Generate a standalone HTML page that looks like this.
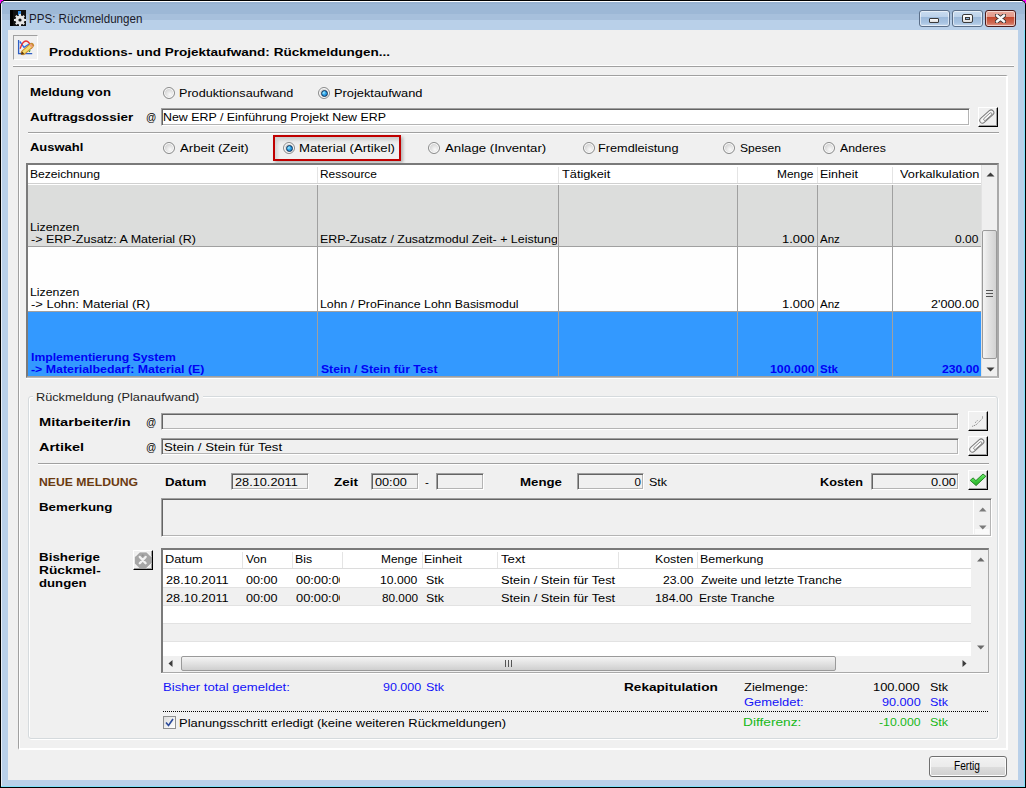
<!DOCTYPE html><html><head><meta charset="utf-8"><style>html,body{margin:0;padding:0;width:1026px;height:788px;overflow:hidden;background:#000}</style></head><body><div style="position:absolute;left:0px;top:0px;width:1026px;height:788px;background:#f0f"></div><div style="position:absolute;left:0px;top:0px;width:1026px;height:788px;background:#000;border-radius:5px 5px 0 0"></div><div style="position:absolute;left:1px;top:1px;width:1024px;height:786px;background:#b9d0e9;border-radius:4px 4px 0 0;overflow:hidden"></div><div style="position:absolute;left:4px;top:1px;width:1018px;height:1px;background:#fdfeff"></div><div style="position:absolute;left:2px;top:2px;width:1022px;height:2px;background:#98b3d2"></div><div style="position:absolute;left:1px;top:4px;width:1024px;height:10px;background:#9db8d6"></div><div style="position:absolute;left:1px;top:14px;width:1024px;height:6px;background:#a7c0dc"></div><div style="position:absolute;left:1px;top:20px;width:1024px;height:10px;background:#b9d0e9"></div><div style="position:absolute;left:1px;top:4px;width:1px;height:783px;background:#e8eef6"></div><div style="position:absolute;left:1024px;top:30px;width:1px;height:757px;background:#7fe0f8"></div><div style="position:absolute;left:1px;top:786px;width:1024px;height:1px;background:#7fe0f8"></div><div style="position:absolute;left:0px;top:0px;width:3px;height:1px;background:#f0f"></div><div style="position:absolute;left:0px;top:0px;width:1px;height:3px;background:#f0f"></div><div style="position:absolute;left:1023px;top:0px;width:3px;height:1px;background:#f0f"></div><div style="position:absolute;left:1025px;top:0px;width:1px;height:3px;background:#f0f"></div><div style="position:absolute;left:8px;top:30px;width:1010px;height:750px;background:#f0f0f0"></div><svg style="position:absolute;left:10px;top:10px" width="16" height="16" viewBox="0 0 16 16">
<rect x="0" y="0" width="16" height="16" fill="#111"/><rect x="0" y="0" width="3" height="16" fill="#000"/>
<rect x="8" y="1" width="3" height="4" fill="#3a8fe0"/>
<g transform="translate(10,10)" fill="#e6e6e6">
<circle r="4.6"/>
<g stroke="#e6e6e6" stroke-width="2"><line x1="0" y1="-6" x2="0" y2="6"/><line x1="-6" y1="0" x2="6" y2="0"/><line x1="-4.2" y1="-4.2" x2="4.2" y2="4.2"/><line x1="-4.2" y1="4.2" x2="4.2" y2="-4.2"/></g>
<circle r="1.6" fill="#111"/></g></svg><div style="position:absolute;left:919px;top:10px;width:31px;height:17px;box-sizing:border-box;border:1px solid #5a6e88;border-radius:3px;background:linear-gradient(#c9dcf0 0%,#bcd2ea 40%,#9bb9da 41%,#a9c4e2 80%,#c6daef 100%);box-shadow:inset 0 0 0 1px rgba(255,255,255,0.55)"></div><div style="position:absolute;left:952px;top:10px;width:31px;height:17px;box-sizing:border-box;border:1px solid #5a6e88;border-radius:3px;background:linear-gradient(#c9dcf0 0%,#bcd2ea 40%,#9bb9da 41%,#a9c4e2 80%,#c6daef 100%);box-shadow:inset 0 0 0 1px rgba(255,255,255,0.55)"></div><div style="position:absolute;left:985px;top:10px;width:31px;height:17px;box-sizing:border-box;border:1px solid #4a1a1a;border-radius:3px;background:linear-gradient(#e9a99b 0%,#e39a8b 40%,#c4472c 41%,#cf6a54 80%,#e39a8b 100%);box-shadow:inset 0 0 0 1px rgba(255,255,255,0.55)"></div><div style="position:absolute;left:929px;top:18px;width:10px;height:5px;box-sizing:border-box;background:linear-gradient(#fff,#dcdcdc);border:1px solid #3a3a3a;border-radius:1px"></div><div style="position:absolute;left:962px;top:14px;width:11px;height:9px;box-sizing:border-box;border:1px solid #3a3a3a;border-radius:2px;background:linear-gradient(#fff,#e0e0e0)"></div><div style="position:absolute;left:965px;top:17px;width:5px;height:3px;box-sizing:border-box;border:1px solid #3a3a3a;background:#8fb0d8"></div><svg style="position:absolute;left:995px;top:14px" width="11" height="9" viewBox="0 0 11 9">
<path d="M2 1.5 L9 7.5 M9 1.5 L2 7.5" stroke="#2a2a2a" stroke-width="4.2" stroke-linecap="round"/>
<path d="M2 1.5 L9 7.5 M9 1.5 L2 7.5" stroke="#fafafa" stroke-width="2.6" stroke-linecap="round"/></svg><div style="position:absolute;left:13px;top:35px;width:25px;height:25px;box-sizing:border-box;border-top:1px solid #a0a0a0;border-left:1px solid #a0a0a0;border-right:1px solid #fff;border-bottom:1px solid #fff"></div><svg style="position:absolute;left:14px;top:36px" width="24" height="24" viewBox="0 0 24 24">
<path d="M4.6 4 V17.6 H18.2" fill="none" stroke="#2d5ec4" stroke-width="1.3"/>
<path d="M5.8 5.5 L10 11.3 L16.5 7.3" fill="none" stroke="#2a6ae8" stroke-width="1.3"/>
<path d="M6.1 12.8 C8 7 10 5 12 5 C14 5 16 7 17.7 12.5" fill="none" stroke="#ea3030" stroke-width="1.3"/>
<path d="M15 15.8 L16.2 14.3" stroke="#2a9a2a" stroke-width="1.2"/>
<path d="M9.2 16.6 L17.6 9.4" stroke="#c88a30" stroke-width="5" stroke-linecap="round"/>
<path d="M9.2 16.6 L17.6 9.4" stroke="#f4dc70" stroke-width="3"/>
<path d="M16.4 10.4 L18 9" stroke="#f0a080" stroke-width="3"/>
<path d="M6.6 18.8 L8 15.6 L10.2 17.8 Z" fill="#5a3a10"/>
</svg><div style="position:absolute;left:13px;top:65px;width:1001px;height:1px;background:#fff"></div><div style="position:absolute;left:13px;top:66px;width:1001px;height:1px;background:#a0a0a0"></div><div style="position:absolute;left:18px;top:75px;width:990px;height:675px;box-sizing:border-box;border-top:1px solid #a0a0a0;border-left:1px solid #a0a0a0;border-right:2px solid #fff;border-bottom:2px solid #fff;box-shadow:inset 1px 1px 0 #fff"></div><div style="position:absolute;left:163px;top:87px;width:12px;height:12px;border-radius:50%;box-sizing:border-box;border:1px solid #8a8b8b;box-shadow:inset 0 0 0 1px #fff;background:radial-gradient(circle at 60% 65%,#fafafa 0%,#e6e6e6 35%,#cfcfcf 75%,#fff 76%)"></div><div style="position:absolute;left:318px;top:87px;width:12px;height:12px;border-radius:50%;box-sizing:border-box;border:1px solid #8a8b8b;box-shadow:inset 0 0 0 1px #fff;background:radial-gradient(circle at 60% 65%,#fafafa 0%,#e6e6e6 35%,#cfcfcf 75%,#fff 76%)"></div><div style="position:absolute;left:320.5px;top:89.5px;width:7px;height:7px;border-radius:50%;box-sizing:border-box;border:1px solid #0b2f55;background:radial-gradient(circle at 35% 35%,#a8f0ff 0%,#2aa0e8 45%,#1670b8 100%)"></div><div style="position:absolute;left:161px;top:108px;width:809px;height:18px;box-sizing:border-box;background:#fff;border-top:1px solid #a0a0a0;border-left:1px solid #a0a0a0;border-right:1px solid #fff;border-bottom:1px solid #fff;box-shadow:inset 1px 1px 0 #646464,inset -1px -1px 0 #b4b4b4"></div><div style="position:absolute;left:978px;top:107px;width:20px;height:20px;box-sizing:border-box;background:#f0f0f0;border-top:1px solid #fff;border-left:1px solid #fff;border-right:1px solid #000;border-bottom:1px solid #000;box-shadow:inset -1px -1px 0 #a0a0a0"></div><svg style="position:absolute;left:978px;top:107px" width="20" height="20" viewBox="0 0 20 20">
<rect x="0.3" y="6.9" width="17" height="5.4" rx="2.7" transform="rotate(-42 8.8 9.6)" fill="#f8f8f8" stroke="#7a7a7a" stroke-width="1"/>
<rect x="4.6" y="8.4" width="10.4" height="2.4" rx="1.2" transform="rotate(-42 9.8 9.6)" fill="none" stroke="#7a7a7a" stroke-width="0.8"/></svg><div style="position:absolute;left:28px;top:132px;width:971px;height:1px;background:#a0a0a0"></div><div style="position:absolute;left:28px;top:133px;width:971px;height:1px;background:#fff"></div><div style="position:absolute;left:163px;top:142px;width:12px;height:12px;border-radius:50%;box-sizing:border-box;border:1px solid #8a8b8b;box-shadow:inset 0 0 0 1px #fff;background:radial-gradient(circle at 60% 65%,#fafafa 0%,#e6e6e6 35%,#cfcfcf 75%,#fff 76%)"></div><div style="position:absolute;left:275px;top:137px;width:124px;height:22px;background:linear-gradient(#e4e4e4,#f0f0f0 40%);box-shadow:inset 3px 3px 3px rgba(0,0,0,0.10)"></div><div style="position:absolute;left:273px;top:135px;width:128px;height:26px;box-sizing:border-box;border:2px solid #c00000;box-shadow:2px 2px 3px rgba(0,0,0,0.25)"></div><div style="position:absolute;left:283px;top:142px;width:12px;height:12px;border-radius:50%;box-sizing:border-box;border:1px solid #8a8b8b;box-shadow:inset 0 0 0 1px #fff;background:radial-gradient(circle at 60% 65%,#fafafa 0%,#e6e6e6 35%,#cfcfcf 75%,#fff 76%)"></div><div style="position:absolute;left:285.5px;top:144.5px;width:7px;height:7px;border-radius:50%;box-sizing:border-box;border:1px solid #0b2f55;background:radial-gradient(circle at 35% 35%,#a8f0ff 0%,#2aa0e8 45%,#1670b8 100%)"></div><div style="position:absolute;left:428px;top:142px;width:12px;height:12px;border-radius:50%;box-sizing:border-box;border:1px solid #8a8b8b;box-shadow:inset 0 0 0 1px #fff;background:radial-gradient(circle at 60% 65%,#fafafa 0%,#e6e6e6 35%,#cfcfcf 75%,#fff 76%)"></div><div style="position:absolute;left:583px;top:142px;width:12px;height:12px;border-radius:50%;box-sizing:border-box;border:1px solid #8a8b8b;box-shadow:inset 0 0 0 1px #fff;background:radial-gradient(circle at 60% 65%,#fafafa 0%,#e6e6e6 35%,#cfcfcf 75%,#fff 76%)"></div><div style="position:absolute;left:723px;top:142px;width:12px;height:12px;border-radius:50%;box-sizing:border-box;border:1px solid #8a8b8b;box-shadow:inset 0 0 0 1px #fff;background:radial-gradient(circle at 60% 65%,#fafafa 0%,#e6e6e6 35%,#cfcfcf 75%,#fff 76%)"></div><div style="position:absolute;left:823px;top:142px;width:12px;height:12px;border-radius:50%;box-sizing:border-box;border:1px solid #8a8b8b;box-shadow:inset 0 0 0 1px #fff;background:radial-gradient(circle at 60% 65%,#fafafa 0%,#e6e6e6 35%,#cfcfcf 75%,#fff 76%)"></div><div style="position:absolute;left:26px;top:163px;width:973px;height:215px;box-sizing:border-box;border:2px solid #7a7a7a;border-right-color:#a9a9a9;border-bottom-color:#b9b9b9;background:#fff"></div><div style="position:absolute;left:26px;top:378px;width:973px;height:1px;background:#fff"></div><div style="position:absolute;left:28px;top:165px;width:953px;height:18px;background:#fff"></div><div style="position:absolute;left:28px;top:183px;width:953px;height:1px;background:#d0d0d0"></div><div style="position:absolute;left:28px;top:184px;width:953px;height:1px;background:#fff"></div><div style="position:absolute;left:317px;top:167px;width:1px;height:16px;background:#e4e4e4"></div><div style="position:absolute;left:558px;top:167px;width:1px;height:16px;background:#e4e4e4"></div><div style="position:absolute;left:737px;top:167px;width:1px;height:16px;background:#e4e4e4"></div><div style="position:absolute;left:817px;top:167px;width:1px;height:16px;background:#e4e4e4"></div><div style="position:absolute;left:892px;top:167px;width:1px;height:16px;background:#e4e4e4"></div><div style="position:absolute;left:28px;top:185px;width:953px;height:61px;background:#dcdddc"></div><div style="position:absolute;left:28px;top:246px;width:953px;height:1px;background:#a0a0a0"></div><div style="position:absolute;left:317px;top:185px;width:1px;height:61px;background:#a0a0a0"></div><div style="position:absolute;left:558px;top:185px;width:1px;height:61px;background:#a0a0a0"></div><div style="position:absolute;left:737px;top:185px;width:1px;height:61px;background:#a0a0a0"></div><div style="position:absolute;left:817px;top:185px;width:1px;height:61px;background:#a0a0a0"></div><div style="position:absolute;left:892px;top:185px;width:1px;height:61px;background:#a0a0a0"></div><div style="position:absolute;left:28px;top:247px;width:953px;height:64px;background:#fefefe"></div><div style="position:absolute;left:28px;top:311px;width:953px;height:1px;background:#a0a0a0"></div><div style="position:absolute;left:317px;top:247px;width:1px;height:64px;background:#a0a0a0"></div><div style="position:absolute;left:558px;top:247px;width:1px;height:64px;background:#a0a0a0"></div><div style="position:absolute;left:737px;top:247px;width:1px;height:64px;background:#a0a0a0"></div><div style="position:absolute;left:817px;top:247px;width:1px;height:64px;background:#a0a0a0"></div><div style="position:absolute;left:892px;top:247px;width:1px;height:64px;background:#a0a0a0"></div><div style="position:absolute;left:28px;top:312px;width:953px;height:64px;background:#3399ff"></div><div style="position:absolute;left:28px;top:376px;width:953px;height:1px;background:#a0a0a0"></div><div style="position:absolute;left:317px;top:312px;width:1px;height:64px;background:#a0a0a0"></div><div style="position:absolute;left:558px;top:312px;width:1px;height:64px;background:#a0a0a0"></div><div style="position:absolute;left:737px;top:312px;width:1px;height:64px;background:#a0a0a0"></div><div style="position:absolute;left:817px;top:312px;width:1px;height:64px;background:#a0a0a0"></div><div style="position:absolute;left:892px;top:312px;width:1px;height:64px;background:#a0a0a0"></div><div style="position:absolute;left:981px;top:165px;width:16px;height:211px;background:#efefef;border-left:1px solid #e2e2e2;box-sizing:border-box"></div><svg style="position:absolute;left:986px;top:172px" width="9" height="5"><path d="M0.5 4.5 L4.5 0.5 L8.5 4.5 Z" fill="#3c3c3c"/></svg><svg style="position:absolute;left:986px;top:367px" width="9" height="5"><path d="M0.5 0.5 L4.5 4.5 L8.5 0.5 Z" fill="#3c3c3c"/></svg><div style="position:absolute;left:982px;top:230px;width:15px;height:129px;box-sizing:border-box;border:1px solid #9a9a9a;border-radius:2px;background:linear-gradient(90deg,#f4f4f4,#e4e4e4 40%,#d2d2d2 100%)"></div><div style="position:absolute;left:986px;top:290px;width:7px;height:1px;background:#555"></div><div style="position:absolute;left:986px;top:293px;width:7px;height:1px;background:#555"></div><div style="position:absolute;left:986px;top:296px;width:7px;height:1px;background:#555"></div><div style="position:absolute;left:28px;top:396px;width:970px;height:343px;box-sizing:border-box;border:1px solid #d5dadd;border-radius:3px;box-shadow:inset 1px 1px 0 #fff,1px 1px 0 #fff"></div><div style="position:absolute;left:33px;top:390px;width:170px;height:12px;background:#f0f0f0"></div><div style="position:absolute;left:161px;top:413px;width:798px;height:17px;box-sizing:border-box;background:#f0f0f0;border-top:1px solid #a0a0a0;border-left:1px solid #a0a0a0;border-right:1px solid #fff;border-bottom:1px solid #fff;box-shadow:inset 1px 1px 0 #646464,inset -1px -1px 0 #b4b4b4"></div><div style="position:absolute;left:968px;top:411px;width:20px;height:20px;box-sizing:border-box;background:#f0f0f0;border-top:1px solid #fff;border-left:1px solid #fff;border-right:1px solid #000;border-bottom:1px solid #000;box-shadow:inset -1px -1px 0 #a0a0a0"></div><svg style="position:absolute;left:968px;top:411px" width="20" height="20" viewBox="0 0 20 20"><path d="M4.2 15.4 L8.1 13.8 L14.5 7.4 L14.5 5.1" fill="none" stroke="#7c7c7c" stroke-width="0.9" stroke-dasharray="1.2 0.8"/><path d="M7.2 11.7 L9.7 9.2" fill="none" stroke="#7c7c7c" stroke-width="0.9" stroke-dasharray="1.2 0.8"/></svg><div style="position:absolute;left:161px;top:438px;width:798px;height:17px;box-sizing:border-box;background:#f0f0f0;border-top:1px solid #a0a0a0;border-left:1px solid #a0a0a0;border-right:1px solid #fff;border-bottom:1px solid #fff;box-shadow:inset 1px 1px 0 #646464,inset -1px -1px 0 #b4b4b4"></div><div style="position:absolute;left:968px;top:436px;width:20px;height:20px;box-sizing:border-box;background:#f0f0f0;border-top:1px solid #fff;border-left:1px solid #fff;border-right:1px solid #000;border-bottom:1px solid #000;box-shadow:inset -1px -1px 0 #a0a0a0"></div><svg style="position:absolute;left:968px;top:436px" width="20" height="20" viewBox="0 0 20 20">
<rect x="0.3" y="6.9" width="17" height="5.4" rx="2.7" transform="rotate(-42 8.8 9.6)" fill="#f8f8f8" stroke="#7a7a7a" stroke-width="1"/>
<rect x="4.6" y="8.4" width="10.4" height="2.4" rx="1.2" transform="rotate(-42 9.8 9.6)" fill="none" stroke="#7a7a7a" stroke-width="0.8"/></svg><div style="position:absolute;left:38px;top:463px;width:951px;height:1px;background:#a0a0a0"></div><div style="position:absolute;left:38px;top:464px;width:951px;height:1px;background:#fff"></div><div style="position:absolute;left:231px;top:473px;width:78px;height:17px;box-sizing:border-box;background:#f0f0f0;border-top:1px solid #a0a0a0;border-left:1px solid #a0a0a0;border-right:1px solid #fff;border-bottom:1px solid #fff;box-shadow:inset 1px 1px 0 #646464,inset -1px -1px 0 #b4b4b4"></div><div style="position:absolute;left:371px;top:473px;width:48px;height:17px;box-sizing:border-box;background:#f0f0f0;border-top:1px solid #a0a0a0;border-left:1px solid #a0a0a0;border-right:1px solid #fff;border-bottom:1px solid #fff;box-shadow:inset 1px 1px 0 #646464,inset -1px -1px 0 #b4b4b4"></div><div style="position:absolute;left:436px;top:473px;width:48px;height:17px;box-sizing:border-box;background:#f0f0f0;border-top:1px solid #a0a0a0;border-left:1px solid #a0a0a0;border-right:1px solid #fff;border-bottom:1px solid #fff;box-shadow:inset 1px 1px 0 #646464,inset -1px -1px 0 #b4b4b4"></div><div style="position:absolute;left:577px;top:473px;width:67px;height:17px;box-sizing:border-box;background:#f0f0f0;border-top:1px solid #a0a0a0;border-left:1px solid #a0a0a0;border-right:1px solid #fff;border-bottom:1px solid #fff;box-shadow:inset 1px 1px 0 #646464,inset -1px -1px 0 #b4b4b4"></div><div style="position:absolute;left:871px;top:473px;width:88px;height:17px;box-sizing:border-box;background:#f0f0f0;border-top:1px solid #a0a0a0;border-left:1px solid #a0a0a0;border-right:1px solid #fff;border-bottom:1px solid #fff;box-shadow:inset 1px 1px 0 #646464,inset -1px -1px 0 #b4b4b4"></div><div style="position:absolute;left:968px;top:470px;width:20px;height:20px;box-sizing:border-box;background:#f0f0f0;border-top:1px solid #fff;border-left:1px solid #fff;border-right:1px solid #000;border-bottom:1px solid #000;box-shadow:inset -1px -1px 0 #a0a0a0"></div><svg style="position:absolute;left:968px;top:470px" width="20" height="20" viewBox="0 0 20 20"><defs><linearGradient id="gck" x1="0" y1="0" x2="0.3" y2="1"><stop offset="0" stop-color="#9af59a"/><stop offset="0.5" stop-color="#4cd84c"/><stop offset="1" stop-color="#22a822"/></linearGradient></defs><path d="M2.2 10.4 L5.1 7.9 L7.9 10.6 L15 4 L17.9 6.3 L8.1 15.6 Z" fill="url(#gck)" stroke="#1c7a1c" stroke-width="0.9" stroke-linejoin="round"/></svg><div style="position:absolute;left:161px;top:498px;width:831px;height:39px;box-sizing:border-box;background:#f0f0f0;border-top:1px solid #a0a0a0;border-left:1px solid #a0a0a0;border-right:1px solid #fff;border-bottom:1px solid #fff;box-shadow:inset 1px 1px 0 #646464,inset -1px -1px 0 #b4b4b4"></div><div style="position:absolute;left:973px;top:500px;width:1px;height:34px;background:#fff"></div><div style="position:absolute;left:975px;top:529px;width:14px;height:5px;background:#fafafa"></div><svg style="position:absolute;left:979px;top:507px" width="8" height="5"><path d="M0 4.5 L3.75 0.5 L7.5 4.5 Z" fill="#7a7a7a"/></svg><svg style="position:absolute;left:979px;top:525px" width="8" height="5"><path d="M0 0.5 L3.75 4.5 L7.5 0.5 Z" fill="#7a7a7a"/></svg><div style="position:absolute;left:133px;top:550px;width:20px;height:20px;box-sizing:border-box;background:#f0f0f0;border-top:1px solid #fff;border-left:1px solid #fff;border-right:1px solid #000;border-bottom:1px solid #000;box-shadow:inset -1px -1px 0 #a0a0a0"></div><svg style="position:absolute;left:133px;top:550px" width="20" height="20" viewBox="0 0 20 20">
<path d="M6.7 1.9 H13.5 L18.3 6.7 V13.5 L13.5 18.3 H6.7 L1.9 13.5 V6.7 Z" fill="#a6a6a6"/>
<path d="M1.9 6.7 L6.7 1.9 H13.5 L18.3 6.7" fill="none" stroke="#fff" stroke-width="0.9"/>
<path d="M13.5 18.3 L18.3 13.5" fill="none" stroke="#fff" stroke-width="0.9"/>
<path d="M6.8 7 L12.6 13.2 M12.6 7 L6.8 13.2" stroke="#f2f2f2" stroke-width="2.4" stroke-linecap="round"/>
<circle cx="9.7" cy="5.6" r="1" fill="#909090"/></svg><div style="position:absolute;left:161px;top:548px;width:828px;height:125px;box-sizing:border-box;border:2px solid #7a7a7a;border-right:1px solid #a9a9a9;border-bottom:1px solid #a9a9a9;background:#f0f0f0"></div><div style="position:absolute;left:161px;top:673px;width:828px;height:1px;background:#fff"></div><div style="position:absolute;left:163px;top:550px;width:808px;height:18px;background:#fff"></div><div style="position:absolute;left:163px;top:568px;width:808px;height:1px;background:#dcdcdc"></div><div style="position:absolute;left:242px;top:552px;width:1px;height:16px;background:#e4e4e4"></div><div style="position:absolute;left:292px;top:552px;width:1px;height:16px;background:#e4e4e4"></div><div style="position:absolute;left:342px;top:552px;width:1px;height:16px;background:#e4e4e4"></div><div style="position:absolute;left:422px;top:552px;width:1px;height:16px;background:#e4e4e4"></div><div style="position:absolute;left:497px;top:552px;width:1px;height:16px;background:#e4e4e4"></div><div style="position:absolute;left:618px;top:552px;width:1px;height:16px;background:#e4e4e4"></div><div style="position:absolute;left:697px;top:552px;width:1px;height:16px;background:#e4e4e4"></div><div style="position:absolute;left:163px;top:569px;width:808px;height:19px;background:#fff"></div><div style="position:absolute;left:163px;top:587px;width:808px;height:1px;background:#e2e2e2"></div><div style="position:absolute;left:163px;top:588px;width:808px;height:18px;background:#f0f0f0"></div><div style="position:absolute;left:163px;top:605px;width:808px;height:1px;background:#e2e2e2"></div><div style="position:absolute;left:163px;top:606px;width:808px;height:18px;background:#fff"></div><div style="position:absolute;left:163px;top:623px;width:808px;height:1px;background:#e2e2e2"></div><div style="position:absolute;left:163px;top:624px;width:808px;height:18px;background:#f0f0f0"></div><div style="position:absolute;left:163px;top:641px;width:808px;height:1px;background:#e2e2e2"></div><div style="position:absolute;left:163px;top:642px;width:808px;height:14px;background:#fff"></div><div style="position:absolute;left:971px;top:550px;width:16px;height:107px;background:#f0f0f0"></div><svg style="position:absolute;left:977px;top:557px" width="8" height="5"><path d="M0 4.5 L3.75 0.5 L7.5 4.5 Z" fill="#6a6a6a"/></svg><svg style="position:absolute;left:977px;top:645px" width="8" height="5"><path d="M0 0.5 L3.75 4.5 L7.5 0.5 Z" fill="#6a6a6a"/></svg><div style="position:absolute;left:163px;top:656px;width:808px;height:15px;background:#f0f0f0"></div><svg style="position:absolute;left:168px;top:660px" width="5" height="7"><path d="M4.5 0 L0.5 3.5 L4.5 7 Z" fill="#3c3c3c"/></svg><svg style="position:absolute;left:962px;top:660px" width="5" height="7"><path d="M0.5 0 L4.5 3.5 L0.5 7 Z" fill="#3c3c3c"/></svg><div style="position:absolute;left:181px;top:656px;width:655px;height:15px;box-sizing:border-box;border:1px solid #9a9a9a;border-radius:2px;background:linear-gradient(#f4f4f4,#e2e2e2 50%,#cfcfcf)"></div><div style="position:absolute;left:505px;top:660px;width:1px;height:7px;background:#555"></div><div style="position:absolute;left:508px;top:660px;width:1px;height:7px;background:#555"></div><div style="position:absolute;left:511px;top:660px;width:1px;height:7px;background:#555"></div><div style="position:absolute;left:163px;top:711px;width:825px;height:1px;background:repeating-linear-gradient(90deg,#000 0 1px,transparent 1px 2px)"></div><div style="position:absolute;left:163px;top:716px;width:13px;height:13px;box-sizing:border-box;border:1px solid #8e8f8f;background:linear-gradient(135deg,#dcdcdc,#fff)"></div><svg style="position:absolute;left:165px;top:718px" width="9" height="9"><path d="M1 4.5 L3.5 7.5 L8 1" fill="none" stroke="#2a4a9a" stroke-width="1.6"/></svg><div style="position:absolute;left:929px;top:756px;width:78px;height:21px;box-sizing:border-box;border:1px solid #707070;border-radius:3px;background:linear-gradient(#f2f2f2 0%,#ebebeb 50%,#dddddd 51%,#cfcfcf 100%);box-shadow:inset 0 0 0 1px #fcfcfc"></div><span style="position:absolute;left:29.03px;top:9px;font-family:'Liberation Sans', sans-serif;font-size:12px;font-weight:400;line-height:20px;color:#1a1a2a;white-space:nowrap;transform:scaleX(0.9655);transform-origin:0 0">PPS: Rückmeldungen</span><span style="position:absolute;left:49.00px;top:42px;font-family:'Liberation Sans', sans-serif;font-size:11.5px;font-weight:700;line-height:20px;color:#000;white-space:nowrap;transform:scaleX(1.1759);transform-origin:0 0">Produktions- und Projektaufwand: Rückmeldungen...</span><span style="position:absolute;left:29.50px;top:82px;font-family:'Liberation Sans', sans-serif;font-size:11.5px;font-weight:700;line-height:20px;color:#000;white-space:nowrap;transform:scaleX(1.1408);transform-origin:0 0">Meldung von</span><span style="position:absolute;left:178.90px;top:83px;font-family:'Liberation Sans', sans-serif;font-size:11.5px;font-weight:400;line-height:20px;color:#000;white-space:nowrap;transform:scaleX(1.0971);transform-origin:0 0">Produktionsaufwand</span><span style="position:absolute;left:333.88px;top:83px;font-family:'Liberation Sans', sans-serif;font-size:11.5px;font-weight:400;line-height:20px;color:#000;white-space:nowrap;transform:scaleX(1.1154);transform-origin:0 0">Projektaufwand</span><span style="position:absolute;left:29.50px;top:107px;font-family:'Liberation Sans', sans-serif;font-size:11.5px;font-weight:700;line-height:20px;color:#000;white-space:nowrap;transform:scaleX(1.1705);transform-origin:0 0">Auftragsdossier</span><span style="position:absolute;left:145.53px;top:107px;font-family:'Liberation Sans', sans-serif;font-size:10.5px;font-weight:400;line-height:20px;color:#000;white-space:nowrap;transform:scaleX(0.9667);transform-origin:0 0">@</span><span style="position:absolute;left:163.42px;top:107px;font-family:'Liberation Sans', sans-serif;font-size:11.5px;font-weight:400;line-height:20px;color:#000;white-space:nowrap;transform:scaleX(1.0777);transform-origin:0 0">New ERP / Einführung Projekt New ERP</span><span style="position:absolute;left:29.50px;top:137px;font-family:'Liberation Sans', sans-serif;font-size:11.5px;font-weight:700;line-height:20px;color:#000;white-space:nowrap;transform:scaleX(1.1277);transform-origin:0 0">Auswahl</span><span style="position:absolute;left:180.00px;top:138px;font-family:'Liberation Sans', sans-serif;font-size:11.5px;font-weight:400;line-height:20px;color:#000;white-space:nowrap;transform:scaleX(1.1417);transform-origin:0 0">Arbeit (Zeit)</span><span style="position:absolute;left:298.85px;top:138px;font-family:'Liberation Sans', sans-serif;font-size:11.5px;font-weight:400;line-height:20px;color:#000;white-space:nowrap;transform:scaleX(1.1463);transform-origin:0 0">Material (Artikel)</span><span style="position:absolute;left:444.50px;top:138px;font-family:'Liberation Sans', sans-serif;font-size:11.5px;font-weight:400;line-height:20px;color:#000;white-space:nowrap;transform:scaleX(1.1477);transform-origin:0 0">Anlage (Inventar)</span><span style="position:absolute;left:598.40px;top:138px;font-family:'Liberation Sans', sans-serif;font-size:11.5px;font-weight:400;line-height:20px;color:#000;white-space:nowrap;transform:scaleX(1.1042);transform-origin:0 0">Fremdleistung</span><span style="position:absolute;left:739.50px;top:138px;font-family:'Liberation Sans', sans-serif;font-size:11.5px;font-weight:400;line-height:20px;color:#000;white-space:nowrap;transform:scaleX(1.0513);transform-origin:0 0">Spesen</span><span style="position:absolute;left:840.00px;top:138px;font-family:'Liberation Sans', sans-serif;font-size:11.5px;font-weight:400;line-height:20px;color:#000;white-space:nowrap;transform:scaleX(1.0698);transform-origin:0 0">Anderes</span><span style="position:absolute;left:30.29px;top:165px;font-family:'Liberation Sans', sans-serif;font-size:10px;font-weight:400;line-height:20px;color:#000;white-space:nowrap;transform:scaleX(1.2105);transform-origin:0 0">Bezeichnung</span><span style="position:absolute;left:320.31px;top:165px;font-family:'Liberation Sans', sans-serif;font-size:10px;font-weight:400;line-height:20px;color:#000;white-space:nowrap;transform:scaleX(1.1915);transform-origin:0 0">Ressource</span><span style="position:absolute;left:561.50px;top:165px;font-family:'Liberation Sans', sans-serif;font-size:10px;font-weight:400;line-height:20px;color:#000;white-space:nowrap;transform:scaleX(1.2763);transform-origin:0 0">Tätigkeit</span><span style="position:absolute;left:776.61px;top:165px;font-family:'Liberation Sans', sans-serif;font-size:10px;font-weight:400;line-height:20px;color:#000;white-space:nowrap;transform:scaleX(1.1900);transform-origin:0 0">Menge</span><span style="position:absolute;left:819.76px;top:165px;font-family:'Liberation Sans', sans-serif;font-size:10px;font-weight:400;line-height:20px;color:#000;white-space:nowrap;transform:scaleX(1.2400);transform-origin:0 0">Einheit</span><span style="position:absolute;left:899.50px;top:165px;font-family:'Liberation Sans', sans-serif;font-size:10px;font-weight:400;line-height:20px;color:#000;white-space:nowrap;transform:scaleX(1.2742);transform-origin:0 0">Vorkalkulation</span><span style="position:absolute;left:29.77px;top:218px;font-family:'Liberation Sans', sans-serif;font-size:10px;font-weight:400;line-height:20px;color:#000;white-space:nowrap;transform:scaleX(1.2308);transform-origin:0 0">Lizenzen</span><span style="position:absolute;left:30.50px;top:230px;font-family:'Liberation Sans', sans-serif;font-size:10px;font-weight:400;line-height:20px;color:#000;white-space:nowrap;transform:scaleX(1.2500);transform-origin:0 0">-&gt; ERP-Zusatz: A Material (R)</span><div style="position:absolute;left:320px;top:230px;width:237px;height:20px;overflow:hidden"><span style="position:absolute;left:-0.24px;top:0px;font-family:'Liberation Sans', sans-serif;font-size:10px;font-weight:400;line-height:20px;color:#000;white-space:nowrap;transform:scaleX(1.2421);transform-origin:0 0">ERP-Zusatz / Zusatzmodul Zeit- + Leistung</span></div><span style="position:absolute;left:782.21px;top:230px;font-family:'Liberation Sans', sans-serif;font-size:10px;font-weight:400;line-height:20px;color:#000;white-space:nowrap;transform:scaleX(1.2917);transform-origin:0 0">1.000</span><span style="position:absolute;left:820.00px;top:230px;font-family:'Liberation Sans', sans-serif;font-size:10px;font-weight:400;line-height:20px;color:#000;white-space:nowrap;transform:scaleX(1.1529);transform-origin:0 0">Anz</span><span style="position:absolute;left:955.30px;top:230px;font-family:'Liberation Sans', sans-serif;font-size:10px;font-weight:400;line-height:20px;color:#000;white-space:nowrap;transform:scaleX(1.2000);transform-origin:0 0">0.00</span><span style="position:absolute;left:29.77px;top:283px;font-family:'Liberation Sans', sans-serif;font-size:10px;font-weight:400;line-height:20px;color:#000;white-space:nowrap;transform:scaleX(1.2308);transform-origin:0 0">Lizenzen</span><span style="position:absolute;left:30.50px;top:295px;font-family:'Liberation Sans', sans-serif;font-size:10px;font-weight:400;line-height:20px;color:#000;white-space:nowrap;transform:scaleX(1.2935);transform-origin:0 0">-&gt; Lohn: Material (R)</span><span style="position:absolute;left:319.77px;top:295px;font-family:'Liberation Sans', sans-serif;font-size:10px;font-weight:400;line-height:20px;color:#000;white-space:nowrap;transform:scaleX(1.2312);transform-origin:0 0">Lohn / ProFinance Lohn Basismodul</span><span style="position:absolute;left:782.21px;top:295px;font-family:'Liberation Sans', sans-serif;font-size:10px;font-weight:400;line-height:20px;color:#000;white-space:nowrap;transform:scaleX(1.2917);transform-origin:0 0">1.000</span><span style="position:absolute;left:820.00px;top:295px;font-family:'Liberation Sans', sans-serif;font-size:10px;font-weight:400;line-height:20px;color:#000;white-space:nowrap;transform:scaleX(1.1529);transform-origin:0 0">Anz</span><span style="position:absolute;left:931.30px;top:295px;font-family:'Liberation Sans', sans-serif;font-size:10px;font-weight:400;line-height:20px;color:#000;white-space:nowrap;transform:scaleX(1.2632);transform-origin:0 0">2&#x27;000.00</span><span style="position:absolute;left:30.50px;top:348px;font-family:'Liberation Sans', sans-serif;font-size:10px;font-weight:700;line-height:20px;color:#0000f5;white-space:nowrap;transform:scaleX(1.2185);transform-origin:0 0">Implementierung System</span><span style="position:absolute;left:30.50px;top:360px;font-family:'Liberation Sans', sans-serif;font-size:10px;font-weight:700;line-height:20px;color:#0000f5;white-space:nowrap;transform:scaleX(1.2357);transform-origin:0 0">-&gt; Materialbedarf: Material (E)</span><span style="position:absolute;left:321.00px;top:360px;font-family:'Liberation Sans', sans-serif;font-size:10px;font-weight:700;line-height:20px;color:#0000f5;white-space:nowrap;transform:scaleX(1.2135);transform-origin:0 0">Stein / Stein für Test</span><span style="position:absolute;left:770.00px;top:360px;font-family:'Liberation Sans', sans-serif;font-size:10px;font-weight:700;line-height:20px;color:#0000f5;white-space:nowrap;transform:scaleX(1.2361);transform-origin:0 0">100.000</span><span style="position:absolute;left:820.00px;top:360px;font-family:'Liberation Sans', sans-serif;font-size:10px;font-weight:700;line-height:20px;color:#0000f5;white-space:nowrap;transform:scaleX(1.1562);transform-origin:0 0">Stk</span><span style="position:absolute;left:941.60px;top:360px;font-family:'Liberation Sans', sans-serif;font-size:10px;font-weight:700;line-height:20px;color:#0000f5;white-space:nowrap;transform:scaleX(1.2161);transform-origin:0 0">230.00</span><span style="position:absolute;left:35.89px;top:387px;font-family:'Liberation Sans', sans-serif;font-size:11.5px;font-weight:400;line-height:20px;color:#1e1e1e;white-space:nowrap;transform:scaleX(1.1062);transform-origin:0 0">Rückmeldung (Planaufwand)</span><span style="position:absolute;left:38.80px;top:412px;font-family:'Liberation Sans', sans-serif;font-size:11.5px;font-weight:700;line-height:20px;color:#000;white-space:nowrap;transform:scaleX(1.2708);transform-origin:0 0">Mitarbeiter/in</span><span style="position:absolute;left:145.53px;top:412px;font-family:'Liberation Sans', sans-serif;font-size:10.5px;font-weight:400;line-height:20px;color:#000;white-space:nowrap;transform:scaleX(0.9667);transform-origin:0 0">@</span><span style="position:absolute;left:38.80px;top:437px;font-family:'Liberation Sans', sans-serif;font-size:11.5px;font-weight:700;line-height:20px;color:#000;white-space:nowrap;transform:scaleX(1.2571);transform-origin:0 0">Artikel</span><span style="position:absolute;left:145.53px;top:437px;font-family:'Liberation Sans', sans-serif;font-size:10.5px;font-weight:400;line-height:20px;color:#000;white-space:nowrap;transform:scaleX(0.9667);transform-origin:0 0">@</span><span style="position:absolute;left:164.00px;top:437px;font-family:'Liberation Sans', sans-serif;font-size:11.5px;font-weight:400;line-height:20px;color:#000;white-space:nowrap;transform:scaleX(1.1505);transform-origin:0 0">Stein / Stein für Test</span><span style="position:absolute;left:38.80px;top:472px;font-family:'Liberation Sans', sans-serif;font-size:11.5px;font-weight:700;line-height:20px;color:#6b3a10;white-space:nowrap;transform:scaleX(1.0624);transform-origin:0 0">NEUE MELDUNG</span><span style="position:absolute;left:164.50px;top:472px;font-family:'Liberation Sans', sans-serif;font-size:11.5px;font-weight:700;line-height:20px;color:#000;white-space:nowrap;transform:scaleX(1.1571);transform-origin:0 0">Datum</span><span style="position:absolute;left:235.00px;top:472px;font-family:'Liberation Sans', sans-serif;font-size:11.5px;font-weight:400;line-height:20px;color:#000;white-space:nowrap;transform:scaleX(1.1071);transform-origin:0 0">28.10.2011</span><span style="position:absolute;left:334.00px;top:472px;font-family:'Liberation Sans', sans-serif;font-size:11.5px;font-weight:700;line-height:20px;color:#000;white-space:nowrap;transform:scaleX(1.1667);transform-origin:0 0">Zeit</span><span style="position:absolute;left:374.50px;top:472px;font-family:'Liberation Sans', sans-serif;font-size:11.5px;font-weight:400;line-height:20px;color:#000;white-space:nowrap;transform:scaleX(1.1034);transform-origin:0 0">00:00</span><span style="position:absolute;left:425.00px;top:472px;font-family:'Liberation Sans', sans-serif;font-size:11.5px;font-weight:400;line-height:20px;color:#000;white-space:nowrap;transform:scaleX(1.0000);transform-origin:0 0">-</span><span style="position:absolute;left:519.50px;top:472px;font-family:'Liberation Sans', sans-serif;font-size:11.5px;font-weight:700;line-height:20px;color:#000;white-space:nowrap;transform:scaleX(1.1528);transform-origin:0 0">Menge</span><span style="position:absolute;left:634.50px;top:472px;font-family:'Liberation Sans', sans-serif;font-size:11.5px;font-weight:400;line-height:20px;color:#000;white-space:nowrap;transform:scaleX(1.0000);transform-origin:0 0">0</span><span style="position:absolute;left:649.00px;top:472px;font-family:'Liberation Sans', sans-serif;font-size:11.5px;font-weight:400;line-height:20px;color:#000;white-space:nowrap;transform:scaleX(1.0882);transform-origin:0 0">Stk</span><span style="position:absolute;left:819.50px;top:472px;font-family:'Liberation Sans', sans-serif;font-size:11.5px;font-weight:700;line-height:20px;color:#000;white-space:nowrap;transform:scaleX(1.1026);transform-origin:0 0">Kosten</span><span style="position:absolute;left:931.00px;top:472px;font-family:'Liberation Sans', sans-serif;font-size:11.5px;font-weight:400;line-height:20px;color:#000;white-space:nowrap;transform:scaleX(1.1136);transform-origin:0 0">0.00</span><span style="position:absolute;left:38.80px;top:497px;font-family:'Liberation Sans', sans-serif;font-size:11.5px;font-weight:700;line-height:20px;color:#000;white-space:nowrap;transform:scaleX(1.1587);transform-origin:0 0">Bemerkung</span><span style="position:absolute;left:38.80px;top:547px;font-family:'Liberation Sans', sans-serif;font-size:11.5px;font-weight:700;line-height:20px;color:#000;white-space:nowrap;transform:scaleX(1.1635);transform-origin:0 0">Bisherige</span><span style="position:absolute;left:38.80px;top:560px;font-family:'Liberation Sans', sans-serif;font-size:11.5px;font-weight:700;line-height:20px;color:#000;white-space:nowrap;transform:scaleX(1.1923);transform-origin:0 0">Rückmel-</span><span style="position:absolute;left:38.80px;top:573px;font-family:'Liberation Sans', sans-serif;font-size:11.5px;font-weight:700;line-height:20px;color:#000;white-space:nowrap;transform:scaleX(1.1463);transform-origin:0 0">dungen</span><span style="position:absolute;left:165.22px;top:550px;font-family:'Liberation Sans', sans-serif;font-size:10px;font-weight:400;line-height:20px;color:#000;white-space:nowrap;transform:scaleX(1.2786);transform-origin:0 0">Datum</span><span style="position:absolute;left:246.00px;top:550px;font-family:'Liberation Sans', sans-serif;font-size:10px;font-weight:400;line-height:20px;color:#000;white-space:nowrap;transform:scaleX(1.2000);transform-origin:0 0">Von</span><span style="position:absolute;left:294.77px;top:550px;font-family:'Liberation Sans', sans-serif;font-size:10px;font-weight:400;line-height:20px;color:#000;white-space:nowrap;transform:scaleX(1.2308);transform-origin:0 0">Bis</span><span style="position:absolute;left:381.11px;top:550px;font-family:'Liberation Sans', sans-serif;font-size:10px;font-weight:400;line-height:20px;color:#000;white-space:nowrap;transform:scaleX(1.1900);transform-origin:0 0">Menge</span><span style="position:absolute;left:424.26px;top:550px;font-family:'Liberation Sans', sans-serif;font-size:10px;font-weight:400;line-height:20px;color:#000;white-space:nowrap;transform:scaleX(1.2400);transform-origin:0 0">Einheit</span><span style="position:absolute;left:501.00px;top:550px;font-family:'Liberation Sans', sans-serif;font-size:10px;font-weight:400;line-height:20px;color:#000;white-space:nowrap;transform:scaleX(1.3158);transform-origin:0 0">Text</span><span style="position:absolute;left:654.77px;top:550px;font-family:'Liberation Sans', sans-serif;font-size:10px;font-weight:400;line-height:20px;color:#000;white-space:nowrap;transform:scaleX(1.2333);transform-origin:0 0">Kosten</span><span style="position:absolute;left:699.76px;top:550px;font-family:'Liberation Sans', sans-serif;font-size:10px;font-weight:400;line-height:20px;color:#000;white-space:nowrap;transform:scaleX(1.2400);transform-origin:0 0">Bemerkung</span><span style="position:absolute;left:165.50px;top:571px;font-family:'Liberation Sans', sans-serif;font-size:10px;font-weight:400;line-height:20px;color:#000;white-space:nowrap;transform:scaleX(1.2714);transform-origin:0 0">28.10.2011</span><span style="position:absolute;left:245.50px;top:571px;font-family:'Liberation Sans', sans-serif;font-size:10px;font-weight:400;line-height:20px;color:#000;white-space:nowrap;transform:scaleX(1.2600);transform-origin:0 0">00:00</span><div style="position:absolute;left:294.5px;top:571px;width:45.5px;height:20px;overflow:hidden"><span style="position:absolute;left:1.00px;top:0px;font-family:'Liberation Sans', sans-serif;font-size:10px;font-weight:400;line-height:20px;color:#000;white-space:nowrap;transform:scaleX(1.2821);transform-origin:0 0">00:00:00</span></div><span style="position:absolute;left:380.28px;top:571px;font-family:'Liberation Sans', sans-serif;font-size:10px;font-weight:400;line-height:20px;color:#000;white-space:nowrap;transform:scaleX(1.2167);transform-origin:0 0">10.000</span><span style="position:absolute;left:425.50px;top:571px;font-family:'Liberation Sans', sans-serif;font-size:10px;font-weight:400;line-height:20px;color:#000;white-space:nowrap;transform:scaleX(1.2333);transform-origin:0 0">Stk</span><span style="position:absolute;left:500.50px;top:571px;font-family:'Liberation Sans', sans-serif;font-size:10px;font-weight:400;line-height:20px;color:#000;white-space:nowrap;transform:scaleX(1.2778);transform-origin:0 0">Stein / Stein für Test</span><span style="position:absolute;left:662.50px;top:571px;font-family:'Liberation Sans', sans-serif;font-size:10px;font-weight:400;line-height:20px;color:#000;white-space:nowrap;transform:scaleX(1.2200);transform-origin:0 0">23.00</span><span style="position:absolute;left:700.50px;top:571px;font-family:'Liberation Sans', sans-serif;font-size:10px;font-weight:400;line-height:20px;color:#000;white-space:nowrap;transform:scaleX(1.2304);transform-origin:0 0">Zweite und letzte Tranche</span><span style="position:absolute;left:165.50px;top:589px;font-family:'Liberation Sans', sans-serif;font-size:10px;font-weight:400;line-height:20px;color:#000;white-space:nowrap;transform:scaleX(1.2714);transform-origin:0 0">28.10.2011</span><span style="position:absolute;left:245.50px;top:589px;font-family:'Liberation Sans', sans-serif;font-size:10px;font-weight:400;line-height:20px;color:#000;white-space:nowrap;transform:scaleX(1.2600);transform-origin:0 0">00:00</span><div style="position:absolute;left:294.5px;top:589px;width:45.5px;height:20px;overflow:hidden"><span style="position:absolute;left:1.00px;top:0px;font-family:'Liberation Sans', sans-serif;font-size:10px;font-weight:400;line-height:20px;color:#000;white-space:nowrap;transform:scaleX(1.2821);transform-origin:0 0">00:00:00</span></div><span style="position:absolute;left:381.50px;top:589px;font-family:'Liberation Sans', sans-serif;font-size:10px;font-weight:400;line-height:20px;color:#000;white-space:nowrap;transform:scaleX(1.1774);transform-origin:0 0">80.000</span><span style="position:absolute;left:425.50px;top:589px;font-family:'Liberation Sans', sans-serif;font-size:10px;font-weight:400;line-height:20px;color:#000;white-space:nowrap;transform:scaleX(1.2333);transform-origin:0 0">Stk</span><span style="position:absolute;left:500.50px;top:589px;font-family:'Liberation Sans', sans-serif;font-size:10px;font-weight:400;line-height:20px;color:#000;white-space:nowrap;transform:scaleX(1.2778);transform-origin:0 0">Stein / Stein für Test</span><span style="position:absolute;left:654.77px;top:589px;font-family:'Liberation Sans', sans-serif;font-size:10px;font-weight:400;line-height:20px;color:#000;white-space:nowrap;transform:scaleX(1.2333);transform-origin:0 0">184.00</span><span style="position:absolute;left:699.29px;top:589px;font-family:'Liberation Sans', sans-serif;font-size:10px;font-weight:400;line-height:20px;color:#000;white-space:nowrap;transform:scaleX(1.2131);transform-origin:0 0">Erste Tranche</span><span style="position:absolute;left:163.36px;top:677px;font-family:'Liberation Sans', sans-serif;font-size:11.5px;font-weight:400;line-height:20px;color:#1212f8;white-space:nowrap;transform:scaleX(1.1409);transform-origin:0 0">Bisher total gemeldet:</span><span style="position:absolute;left:382.50px;top:677px;font-family:'Liberation Sans', sans-serif;font-size:11.5px;font-weight:400;line-height:20px;color:#1212f8;white-space:nowrap;transform:scaleX(1.0857);transform-origin:0 0">90.000</span><span style="position:absolute;left:426.00px;top:677px;font-family:'Liberation Sans', sans-serif;font-size:11.5px;font-weight:400;line-height:20px;color:#1212f8;white-space:nowrap;transform:scaleX(1.0882);transform-origin:0 0">Stk</span><span style="position:absolute;left:624.00px;top:677px;font-family:'Liberation Sans', sans-serif;font-size:11.5px;font-weight:700;line-height:20px;color:#000;white-space:nowrap;transform:scaleX(1.1835);transform-origin:0 0">Rekapitulation</span><span style="position:absolute;left:744.00px;top:677px;font-family:'Liberation Sans', sans-serif;font-size:11.5px;font-weight:400;line-height:20px;color:#000;white-space:nowrap;transform:scaleX(1.1250);transform-origin:0 0">Zielmenge:</span><span style="position:absolute;left:873.38px;top:677px;font-family:'Liberation Sans', sans-serif;font-size:11.5px;font-weight:400;line-height:20px;color:#000;white-space:nowrap;transform:scaleX(1.1220);transform-origin:0 0">100.000</span><span style="position:absolute;left:929.50px;top:677px;font-family:'Liberation Sans', sans-serif;font-size:11.5px;font-weight:400;line-height:20px;color:#000;white-space:nowrap;transform:scaleX(1.0882);transform-origin:0 0">Stk</span><span style="position:absolute;left:744.00px;top:692px;font-family:'Liberation Sans', sans-serif;font-size:11.5px;font-weight:400;line-height:20px;color:#1212f8;white-space:nowrap;transform:scaleX(1.1250);transform-origin:0 0">Gemeldet:</span><span style="position:absolute;left:882.00px;top:692px;font-family:'Liberation Sans', sans-serif;font-size:11.5px;font-weight:400;line-height:20px;color:#1212f8;white-space:nowrap;transform:scaleX(1.1000);transform-origin:0 0">90.000</span><span style="position:absolute;left:929.50px;top:692px;font-family:'Liberation Sans', sans-serif;font-size:11.5px;font-weight:400;line-height:20px;color:#1212f8;white-space:nowrap;transform:scaleX(1.0882);transform-origin:0 0">Stk</span><span style="position:absolute;left:742.81px;top:712px;font-family:'Liberation Sans', sans-serif;font-size:11.5px;font-weight:400;line-height:20px;color:#18b818;white-space:nowrap;transform:scaleX(1.1915);transform-origin:0 0">Differenz:</span><span style="position:absolute;left:879.00px;top:712px;font-family:'Liberation Sans', sans-serif;font-size:11.5px;font-weight:400;line-height:20px;color:#18b818;white-space:nowrap;transform:scaleX(1.0641);transform-origin:0 0">-10.000</span><span style="position:absolute;left:929.50px;top:712px;font-family:'Liberation Sans', sans-serif;font-size:11.5px;font-weight:400;line-height:20px;color:#18b818;white-space:nowrap;transform:scaleX(1.0882);transform-origin:0 0">Stk</span><span style="position:absolute;left:178.88px;top:713px;font-family:'Liberation Sans', sans-serif;font-size:11.5px;font-weight:400;line-height:20px;color:#000;white-space:nowrap;transform:scaleX(1.1246);transform-origin:0 0">Planungsschritt erledigt (keine weiteren Rückmeldungen)</span><span style="position:absolute;left:954.16px;top:756px;font-family:'Liberation Sans', sans-serif;font-size:12px;font-weight:400;line-height:20px;color:#000;white-space:nowrap;transform:scaleX(0.8448);transform-origin:0 0">Fertig</span></body></html>
